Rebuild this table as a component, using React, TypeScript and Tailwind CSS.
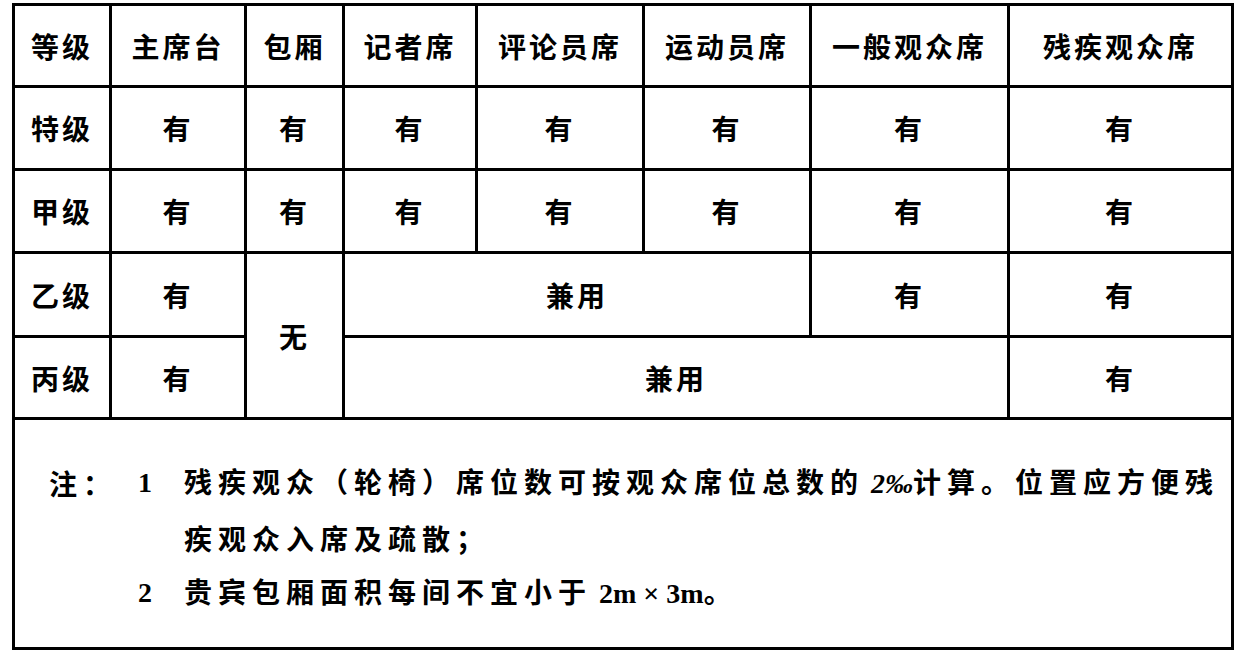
import React from "react";

const th =
  "border-[3px] border-black text-center align-middle text-[28px] tracking-[3px] font-bold";
const td =
  "border-[3px] border-black text-center align-middle text-[28px] tracking-[3px] font-bold";

export default function App() {
  return (
    <div className="w-[1241px] h-[657px] bg-white text-black font-['Noto_Sans_CJK_SC',sans-serif] overflow-hidden pt-[3px] pl-[12px]">
      <table className="w-[1221px] table-fixed border-collapse border-[3px] border-black">
        <colgroup>
          <col className="w-[97px]" />
          <col className="w-[135px]" />
          <col className="w-[98px]" />
          <col className="w-[133px]" />
          <col className="w-[167px]" />
          <col className="w-[167px]" />
          <col className="w-[198px]" />
          <col className="w-[224px]" />
        </colgroup>
        <tbody>
          <tr className="h-[82px]">
            <td className={th}>等级</td>
            <td className={th}>主席台</td>
            <td className={th}>包厢</td>
            <td className={th}>记者席</td>
            <td className={th}>评论员席</td>
            <td className={th}>运动员席</td>
            <td className={th}>一般观众席</td>
            <td className={th}>残疾观众席</td>
          </tr>
          <tr className="h-[83px]">
            <td className={td}>特级</td>
            <td className={td}>有</td>
            <td className={td}>有</td>
            <td className={td}>有</td>
            <td className={td}>有</td>
            <td className={td}>有</td>
            <td className={td}>有</td>
            <td className={td}>有</td>
          </tr>
          <tr className="h-[83px]">
            <td className={td}>甲级</td>
            <td className={td}>有</td>
            <td className={td}>有</td>
            <td className={td}>有</td>
            <td className={td}>有</td>
            <td className={td}>有</td>
            <td className={td}>有</td>
            <td className={td}>有</td>
          </tr>
          <tr className="h-[84px]">
            <td className={td}>乙级</td>
            <td className={td}>有</td>
            <td className={td} rowSpan={2}>无</td>
            <td className={td} colSpan={3}>兼用</td>
            <td className={td}>有</td>
            <td className={td}>有</td>
          </tr>
          <tr className="h-[82px]">
            <td className={td}>丙级</td>
            <td className={td}>有</td>
            <td className={td} colSpan={4}>兼用</td>
            <td className={td}>有</td>
          </tr>
          <tr className="h-[230px]">
            <td colSpan={8} className="border-[3px] border-black align-middle text-left font-bold text-[28px] pt-[8px]">
              <div className="flex flex-col pl-[34px]">
                <div className="flex items-center h-[55px]">
                  <span className="w-[89px] tracking-[6px]">注：</span>
                  <span className="w-[46px] font-['Liberation_Serif',serif] text-[28px]">1</span>
                  <span className="tracking-[6px] whitespace-nowrap">
                    残疾观众（轮椅）席位数可按观众席位总数的
                    <span className="font-['Liberation_Serif',serif] italic tracking-[0px]"> 2‰</span>
                    计算。位置应方便残
                  </span>
                </div>
                <div className="flex items-center h-[55px]">
                  <span className="w-[135px]" />
                  <span className="tracking-[6px] whitespace-nowrap">疾观众入席及疏散；</span>
                </div>
                <div className="flex items-center h-[55px]">
                  <span className="w-[89px]" />
                  <span className="w-[46px] font-['Liberation_Serif',serif] text-[28px]">2</span>
                  <span className="tracking-[6px] whitespace-nowrap">
                    贵宾包厢面积每间不宜小于
                    <span className="font-['Liberation_Serif',serif] tracking-[0px]"> 2m × 3m</span>。
                  </span>
                </div>
              </div>
            </td>
          </tr>
        </tbody>
      </table>
    </div>
  );
}
